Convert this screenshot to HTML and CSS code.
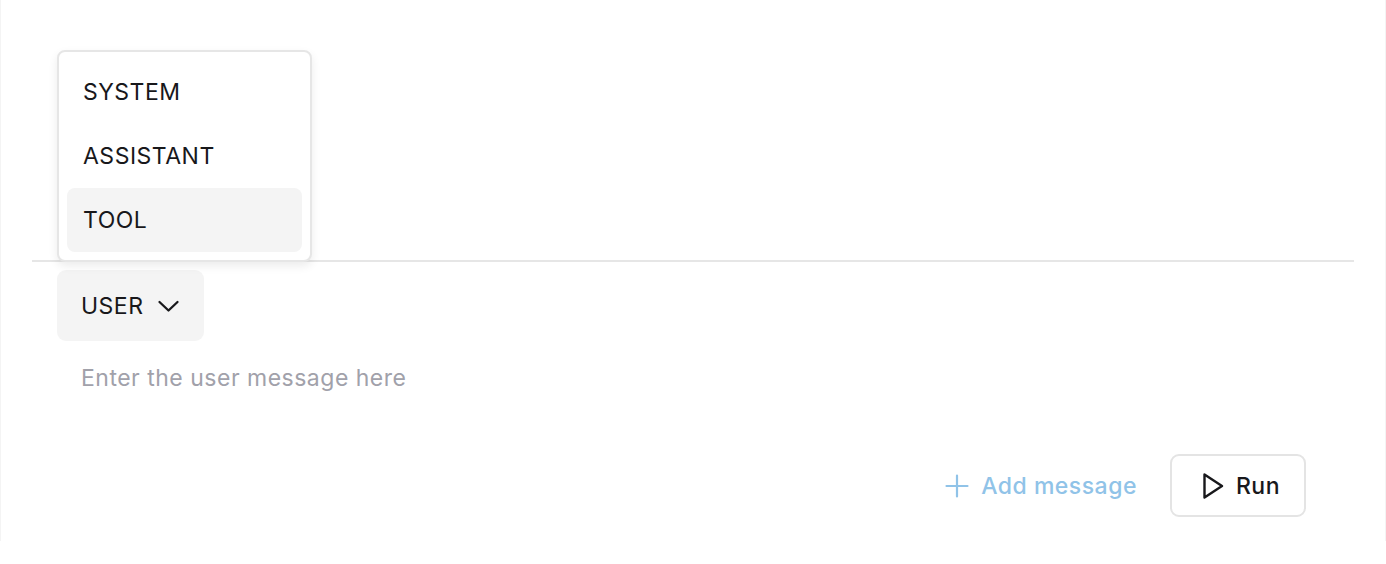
FILE: index.html
```html
<!DOCTYPE html>
<html>
<head>
<meta charset="utf-8">
<link rel="stylesheet" href="styles.css">
</head>
<body>
<div class="frame">
  <div class="history"></div>
  <div class="editor">
    <div class="role-row">
      <button class="role-btn">USER
        <svg class="chev" width="24" height="24" viewBox="0 0 24 24"><path d="M3.5 8 L12.5 16.5 L21.5 8" fill="none" stroke="#18181b" stroke-width="2.3" stroke-linecap="round" stroke-linejoin="round"/></svg>
      </button>
    </div>
    <div class="placeholder">Enter the user message here</div>
    <div class="actions">
      <button class="add-btn">
        <svg width="24" height="24" viewBox="0 0 24 24"><path d="M12 1.5 V22.5 M1.5 12 H22.5" fill="none" stroke="#90c3e8" stroke-width="2.2" stroke-linecap="round"/></svg>
        Add message
      </button>
      <button class="run-btn">
        <svg width="22" height="26" viewBox="0 0 22 26"><path d="M2.5 1.5 L20 13 L2.5 24.5 Z" fill="none" stroke="#18181b" stroke-width="2.4" stroke-linejoin="round"/></svg>
        Run
      </button>
    </div>
  </div>
  <div class="menu">
    <div class="menu-item">SYSTEM</div>
    <div class="menu-item">ASSISTANT</div>
    <div class="menu-item active">TOOL</div>
  </div>
</div>
</body>
</html>
```

FILE: styles.css
```css
* { box-sizing: border-box; }
html, body { margin: 0; padding: 0; background: #fff; }
body { font-family: Inter, "Noto Sans", sans-serif; color: #18181b; letter-spacing: 0.5px; }
.frame {
  position: relative;
  width: 1386px;
  height: 541px;
  border-left: 1px solid #f4f4f4;
  border-right: 1px solid #f4f4f4;
  padding: 0 31px;
}
.history {
  height: 262px;
  border-bottom: 2px solid #e6e6e6;
}
.editor {
  padding: 8px 0 0 25px;
}
.role-row { display: flex; }
.role-btn {
  display: flex;
  align-items: center;
  gap: 12px;
  height: 71px;
  padding: 0 24px 0 24px;
  border: none;
  border-radius: 9px;
  background: #f4f4f4;
  font-family: inherit;
  letter-spacing: inherit;
  font-size: 23px;
  color: #18181b;
}
.placeholder {
  margin-top: 23px;
  padding-left: 24px;
  font-size: 23px;
  line-height: 28px;
  color: #a1a1aa;
}
.actions {
  display: flex;
  justify-content: flex-end;
  align-items: center;
  gap: 33px;
  margin-top: 62px;
  padding-right: 48px;
}
.add-btn {
  display: flex;
  align-items: center;
  gap: 12px;
  border: none;
  background: none;
  padding: 0;
  font-family: inherit;
  letter-spacing: inherit;
  font-size: 23px;
  font-weight: 500;
  color: #90c3e8;
}
.run-btn {
  display: flex;
  align-items: center;
  gap: 12px;
  height: 63px;
  padding: 0 24px 0 30px;
  border: 2px solid #e4e4e4;
  border-radius: 9px;
  background: #fff;
  font-family: inherit;
  letter-spacing: inherit;
  font-size: 23px;
  font-weight: 500;
  color: #18181b;
}
.menu {
  position: absolute;
  left: 56px;
  top: 50px;
  width: 255px;
  padding: 8px;
  background: #fff;
  border: 2px solid #e6e6e6;
  border-radius: 8px;
  box-shadow: 0 4px 10px rgba(0,0,0,0.08);
}
.menu-item {
  height: 64px;
  display: flex;
  align-items: center;
  padding-left: 16px;
  border-radius: 8px;
  font-size: 23px;
  color: #18181b;
}
.menu-item.active { background: #f4f4f4; }
```
